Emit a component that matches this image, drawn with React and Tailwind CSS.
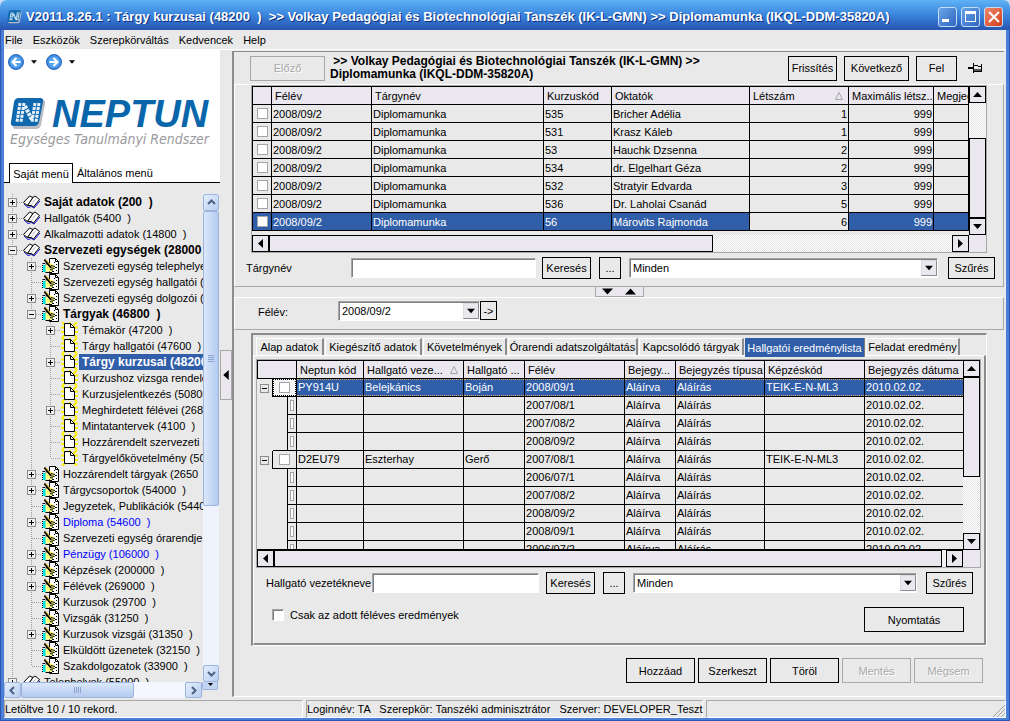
import React, { useState } from 'react'
import clsx from 'clsx'

// ─── Data ───────────────────────────────────────────────────────────────────
// guides: one letter per level (p = plus, m = minus, t = branch, e = last branch, l = line)
const TREE = [
  { guides: 'p', icon: 'book', label: 'Saját adatok (200  )', bold: true },
  { guides: 'p', icon: 'book', label: 'Hallgatók (5400  )' },
  { guides: 'p', icon: 'book', label: 'Alkalmazotti adatok (14800  )' },
  { guides: 'm', icon: 'book', label: 'Szervezeti egységek (28000', bold: true },
  { guides: 'lp', icon: 'hand', label: 'Szervezeti egység telephelyei' },
  { guides: 'lt', icon: 'hand', label: 'Szervezeti egység hallgatói (2' },
  { guides: 'lp', icon: 'hand', label: 'Szervezeti egység dolgozói (2' },
  { guides: 'lm', icon: 'hand', label: 'Tárgyak (46800  )', bold: true },
  { guides: 'llp', icon: 'page', label: 'Témakör (47200  )' },
  { guides: 'llt', icon: 'page', label: 'Tárgy hallgatói (47600  )' },
  { guides: 'llp', icon: 'page', label: 'Tárgy kurzusai (48200', bold: true },
  { guides: 'llt', icon: 'page', label: 'Kurzushoz vizsga rendelé' },
  { guides: 'llt', icon: 'page', label: 'Kurzusjelentkezés (50800' },
  { guides: 'llp', icon: 'page', label: 'Meghirdetett félévei (2684' },
  { guides: 'llt', icon: 'page', label: 'Mintatantervek (4100  )' },
  { guides: 'llt', icon: 'page', label: 'Hozzárendelt szervezeti e' },
  { guides: 'lle', icon: 'page', label: 'Tárgyelőkövetelmény (500' },
  { guides: 'lp', icon: 'hand', label: 'Hozzárendelt tárgyak (2650  )' },
  { guides: 'lp', icon: 'hand', label: 'Tárgycsoportok (54000  )' },
  { guides: 'lt', icon: 'hand', label: 'Jegyzetek, Publikációk (5440' },
  { guides: 'lp', icon: 'hand', label: 'Diploma (54600  )', blue: true },
  { guides: 'lt', icon: 'hand', label: 'Szervezeti egység órarendje (' },
  { guides: 'lp', icon: 'hand', label: 'Pénzügy (106000  )', blue: true },
  { guides: 'lp', icon: 'hand', label: 'Képzések (200000  )' },
  { guides: 'lp', icon: 'hand', label: 'Félévek (269000  )' },
  { guides: 'lt', icon: 'hand', label: 'Kurzusok (29700  )' },
  { guides: 'lt', icon: 'hand', label: 'Vizsgák (31250  )' },
  { guides: 'lp', icon: 'hand', label: 'Kurzusok vizsgái (31350  )' },
  { guides: 'lt', icon: 'hand', label: 'Elküldött üzenetek (32150  )' },
  { guides: 'le', icon: 'hand', label: 'Szakdolgozatok (33900  )' },
  { guides: 'p', icon: 'book', label: 'Telephelyek (55000  )' },
]

const COURSES = [
  ['535', 'Bricher Adélia', 1],
  ['531', 'Krasz Káleb', 1],
  ['53', 'Hauchk Dzsenna', 2],
  ['534', 'dr. Elgelhart Géza', 2],
  ['532', 'Stratyir Edvarda', 3],
  ['536', 'Dr. Laholai Csanád', 5],
  ['56', 'Márovits Rajmonda', 6],
]

const RESULTS = [
  { code: 'PY914U', last: 'Belejkánics', first: 'Boján', term: '2008/09/1' },
  { term: '2007/08/1' },
  { term: '2007/08/2' },
  { term: '2008/09/2', end: true },
  { code: 'D2EU79', last: 'Eszterhay', first: 'Gerő', term: '2007/08/1' },
  { term: '2006/07/1' },
  { term: '2007/08/2' },
  { term: '2008/09/2' },
  { term: '2008/09/1' },
  { term: '2006/07/2' },
]

const TABS = [
  { label: 'Alap adatok', width: 'w-[68px]' },
  { label: 'Kiegészítő adatok', width: 'w-[97px]' },
  { label: 'Követelmények', width: 'w-[84px]' },
  { label: 'Órarendi adatszolgáltatás', width: 'w-[130px]' },
  { label: 'Kapcsolódó tárgyak', width: 'w-[105px]' },
  { label: 'Hallgatói eredménylista', width: 'w-[120px]' },
  { label: 'Feladat eredmény', width: 'w-[94px]' },
]

const DITHER = 'bg-[repeating-conic-gradient(#fff_0_25%,#e4e4e6_0_50%)] bg-[length:2px_2px]'
const SUNKEN = 'border border-t-[#a5a5a8] border-l-[#a5a5a8] border-r-white border-b-white bg-white shadow-[inset_1px_1px_0_#7d7d84]'

// ─── Icons ──────────────────────────────────────────────────────────────────
function BookIcon() {
  return (
    <svg width="18" height="16" viewBox="0 0 18 16" className="shrink-0">
      <path d="M1 10 L5 13.5 L8.5 12.5 L11 14 L17 7" fill="none" stroke="#1010d0" />
      <path d="M0.5 8.5 L6.5 2 L10 3.5 L4.5 11.5 Z" fill="#fff" stroke="#000" strokeLinejoin="round" />
      <path d="M4.5 11.5 L10 3.5 L12 2 L16.5 5.5 L10.5 13 L8 11.5 Z" fill="#fff" stroke="#000" strokeLinejoin="round" />
      <path d="M8 11 L13 4.5" stroke="#c4c4c4" />
    </svg>
  )
}

function HandIcon() {
  return (
    <svg width="18" height="16" viewBox="0 0 18 16" className="shrink-0">
      <path d="M7.5 0.5 H13.5 L16.5 3.5 V15.5 H7.5 Z" fill="#fff" stroke="#000" />
      <path d="M13.5 0.5 V3.5 H16.5" fill="none" stroke="#000" />
      <path d="M12 4.5 H13 M14 6.5 H15 M13 9.5 H15 M14 12.5 H15 M10 13.5 H12" stroke="#000" />
      <path d="M1 7 H4 V14 H1 Z" fill="#00e0e8" />
      <path d="M0.5 5.5 H3" stroke="#000" />
      <path d="M3.5 7.5 L6 5.5 L9 5.5 L13 7.5 L12.5 10 L10 13.5 H3.5 Z" fill="#ffff84" />
      <path d="M3.5 6 L6 5.5 M9 7.5 L13 8.5 M8 9.5 L12.5 10.5 M8 11.5 L11 12 M3.5 14.5 H10" fill="none" stroke="#000" />
      <path d="M2.5 1.5 L9 9.5" stroke="#000" strokeWidth="2" />
      <path d="M3.5 1.5 L9.5 8.5" stroke="#f4c400" />
      <path d="M0.5 7 V15" stroke="#000" strokeDasharray="1 1" />
    </svg>
  )
}

function PageIcon() {
  return (
    <svg width="18" height="16" viewBox="0 0 18 16" className="shrink-0">
      <path
        d="M1 0 L5 4 M9 0 V4 M16 0 L12 4 M17 5.5 H13 M0 5.5 H4 M0 10 H4 M17 10 H13 M1 16 L5 12 M16 16 L12 12"
        stroke="#ffee00"
        strokeWidth="2"
      />
      <path d="M3.5 1.5 H9.5 L13.5 5.5 V13.5 H3.5 Z" fill="#fff" stroke="#000" />
      <path d="M9.5 1.5 V5.5 H13.5" fill="none" stroke="#000" />
    </svg>
  )
}

const ICONS = { book: BookIcon, hand: HandIcon, page: PageIcon }

function Guide({ type }) {
  const boxed = type === 'p' || type === 'm'
  return (
    <svg width="19" height="16" viewBox="0 0 19 16" className="shrink-0" shapeRendering="crispEdges">
      <path d={type === 'e' ? 'M8.5 0 V8' : 'M8.5 0 V16'} stroke="#a0a0a0" strokeDasharray="1 1" />
      {type !== 'l' && <path d="M9 8.5 H19" stroke="#a0a0a0" strokeDasharray="1 1" />}
      {boxed && <rect x="4.5" y="4.5" width="8" height="8" fill="#f0f0f0" stroke="#8c8c90" />}
      {boxed && <path d="M6 8.5 H11" stroke="#000" />}
      {type === 'p' && <path d="M8.5 6 V11" stroke="#000" />}
    </svg>
  )
}

function Triangle({ dir, size = 9 }) {
  const points = { up: '0,7 9,7 4.5,2', down: '0,2 9,2 4.5,7', left: '7,0 7,9 2,4.5', right: '2,0 2,9 7,4.5' }
  return (
    <svg width={size} height={size} viewBox="0 0 9 9">
      <polygon points={points[dir]} fill="#000" />
    </svg>
  )
}

function Chevron({ dir }) {
  const paths = { up: 'M1 6 L4.5 2.5 L8 6', down: 'M1 3 L4.5 6.5 L8 3', left: 'M6 1 L2.5 4.5 L6 8', right: 'M3 1 L6.5 4.5 L3 8' }
  return (
    <svg width="9" height="9" viewBox="0 0 9 9">
      <path d={paths[dir]} fill="none" stroke="#4d6185" strokeWidth="2" />
    </svg>
  )
}

function SortMark() {
  return (
    <svg width="8" height="8" viewBox="0 0 8 8" className="shrink-0">
      <path d="M0.5 7.5 H7.5 L4 0.5 Z" fill="none" stroke="#a8a8a8" />
    </svg>
  )
}

function NavArrow({ flip }) {
  return (
    <svg width="16" height="16" viewBox="0 0 16 16" className={clsx(flip && 'rotate-180')}>
      <circle cx="8" cy="8" r="7.5" fill="#3d8be0" stroke="#2767bd" />
      <ellipse cx="8" cy="8" rx="5.5" ry="5.5" fill="#5aa6ee" />
      <path d="M8.5 4 L4.5 8 L8.5 12 M4.5 8 H12.5" fill="none" stroke="#fff" strokeWidth="2" />
    </svg>
  )
}

function Emblem({ width, height }) {
  return (
    <svg width={width} height={height} viewBox="0 0 36 32" className="shrink-0">
      <path d="M10 2 H32 Q36 2 35 6 L31 27 Q30 31 26 31 H6 Q2 31 3 27 L6 6 Q7 2 10 2 Z" fill="#b9bcc2" />
      <path d="M9 0 H30 Q34 0 33 4 L29 24 Q28 28 24 28 H4 Q0 28 1 24 L4 4 Q5 0 9 0 Z" fill="#0f68ad" />
      <path d="M10 5 L7 24 M14 5 L11 24 M25 5 L22 24 M29 5 L26 24" stroke="#e4f0fa" strokeWidth="3" strokeDasharray="3 1" />
      <path d="M15 8 L22 22" stroke="#e4f0fa" strokeWidth="4" strokeDasharray="3 1" />
    </svg>
  )
}

function PinIcon() {
  return (
    <svg width="15" height="12" viewBox="0 0 15 12" shapeRendering="crispEdges">
      <path d="M0 6 H5" stroke="#000" strokeWidth="2" />
      <path d="M5.5 1 V11 M13.5 2 V10" stroke="#000" />
      <path d="M6 3.5 H9 L11 4.5 H13 M6 9 H13" fill="none" stroke="#000" />
      <path d="M6 7 H13 V9 H6 Z" fill="#555" />
    </svg>
  )
}

// ─── Basic controls ─────────────────────────────────────────────────────────
function Button({ className, disabled, children }) {
  return (
    <button
      disabled={disabled}
      className={clsx(
        'shrink-0 border text-center whitespace-nowrap',
        disabled ? 'border-[#a8a8a8] text-[#a8a8a8] [text-shadow:1px_1px_0_#fff]' : 'border-black',
        className
      )}
    >
      {children}
    </button>
  )
}

function Select({ id, label, value, className }) {
  return (
    <div className={clsx('grid h-5 items-center', SUNKEN, className)}>
      <select id={id} aria-label={label} className="col-start-1 row-start-1 w-full appearance-none bg-transparent pl-[3px] outline-none">
        <option>{value}</option>
      </select>
      <span className="pointer-events-none col-start-1 row-start-1 flex h-4 w-4 items-center justify-center justify-self-end border border-t-[#dcdce0] border-r-[#8c8c90] border-b-[#8c8c90] border-l-[#dcdce0] bg-[#eae8ee]">
        <Triangle dir="down" size={8} />
      </span>
    </div>
  )
}

function Check({ label, small }) {
  return (
    <input
      type="checkbox"
      aria-label={label}
      className={clsx('mx-auto block h-[11px] appearance-none border border-[#a5a5a8] bg-white', small ? 'w-1' : 'w-[11px]')}
    />
  )
}

function ArrowButton({ dir }) {
  return (
    <button aria-label={dir} className="flex h-[17px] w-[17px] shrink-0 items-center justify-center border border-black bg-[#eae8ee]">
      <Triangle dir={dir} />
    </button>
  )
}

function VScroll({ thumb, atEnd }) {
  return (
    <div className="flex w-[17px] shrink-0 flex-col">
      <ArrowButton dir="up" />
      <div className={clsx('flex min-h-0 flex-1 flex-col', DITHER, atEnd && 'justify-end')}>
        <div className={clsx('border border-black bg-[#eae8ee]', thumb)} />
      </div>
      <ArrowButton dir="down" />
    </div>
  )
}

function HScroll({ thumb }) {
  return (
    <div className="flex h-[17px] shrink-0">
      <ArrowButton dir="left" />
      <div className={clsx('flex-1', DITHER)}>
        <div className={clsx('h-full border border-black bg-[#eae8ee]', thumb)} />
      </div>
      <ArrowButton dir="right" />
      <div className="w-[17px] bg-[#eae8ee]" />
    </div>
  )
}

function Th({ children, className, ...rest }) {
  return (
    <th className={clsx('h-[18px] overflow-hidden border-r border-b border-black bg-[#eae8ee] p-0 pl-[3px] text-left font-normal whitespace-nowrap', className)} {...rest}>
      {children}
    </th>
  )
}

// ─── Sidebar ────────────────────────────────────────────────────────────────
const XP_BUTTON = 'flex shrink-0 items-center justify-center rounded-[2px] border border-[#9db5dc] bg-gradient-to-br from-[#e3eefc] to-[#b9cff0]'

function TreeRow({ item, selected, onSelect }) {
  const Icon = ICONS[item.icon]
  return (
    <li className="flex h-4 items-center">
      {[...item.guides].map((g, i) => <Guide key={i} type={g} />)}
      <Icon />
      <button
        onClick={onSelect}
        className={clsx(
          'h-4 shrink-0 pl-[3px] leading-4 whitespace-pre',
          item.bold && 'text-[12px] font-bold',
          item.blue && 'text-[#0000ff]',
          selected && 'bg-[#315ea8] text-white'
        )}
      >
        {item.label}
      </button>
    </li>
  )
}

function Sidebar() {
  const [selected, setSelected] = useState(10)
  return (
    <aside className="flex w-[216px] shrink-0 flex-col">
      <div className="shrink-0 bg-white">
        <div className="flex items-center gap-[7px] pt-1 pl-1">
          <button aria-label="Vissza"><NavArrow /></button>
          <Triangle dir="down" size={6} />
          <button aria-label="Előre" className="ml-[2px]"><NavArrow flip /></button>
          <Triangle dir="down" size={6} />
        </div>
        <div className="mt-5 flex h-10 items-end gap-[6px] pl-[6px]">
          <Emblem width={36} height={32} />
          <span className="font-['Liberation_Sans',sans-serif] text-[38px] leading-8 font-bold text-[#0a66ab] italic">NEPTUN</span>
        </div>
        <p className="mt-px pl-[6px] font-['DejaVu_Sans_Condensed','DejaVu_Sans',sans-serif] text-[14px] leading-4 whitespace-nowrap text-[#9a9a9e] italic">
          Egységes Tanulmányi Rendszer
        </p>
        <div className="mt-4 flex">
          <span className="w-[5px] border-b border-black" />
          <button className="h-5 w-16 border border-b-0 border-black whitespace-nowrap">Saját menü</button>
          <button className="flex-1 border-b border-black pl-1 text-left">Általános menü</button>
        </div>
      </div>

      <div className="mt-[11px] flex min-h-0 flex-1">
        <ul className="min-w-0 flex-1 overflow-hidden">
          {TREE.map((item, i) => (
            <TreeRow key={item.label} item={item} selected={selected === i} onSelect={() => setSelected(i)} />
          ))}
        </ul>
        <div className="mr-px flex w-4 flex-col bg-[#eef3fe]">
          <button aria-label="Fel" className={clsx(XP_BUTTON, 'h-[17px]')}><Chevron dir="up" /></button>
          <div className="min-h-0 flex-1">
            <div className="flex h-[65%] flex-col items-center justify-center gap-px rounded-[2px] border border-[#9db5dc] bg-gradient-to-r from-[#dbe8fc] to-[#b4caee]">
              {[0, 1, 2, 3].map(i => <span key={i} className="h-px w-[6px] bg-[#8ba5d0]" />)}
            </div>
          </div>
          <button aria-label="Le" className={clsx(XP_BUTTON, 'h-[17px]')}><Chevron dir="down" /></button>
        </div>
      </div>

      <div className="mb-[2px] flex h-4 shrink-0">
        <button aria-label="Balra" className={clsx(XP_BUTTON, 'w-[17px]')}><Chevron dir="left" /></button>
        <div className="flex-1 bg-[#f4f7ff]">
          <div className="flex h-full w-[69%] items-center justify-center gap-px rounded-[2px] border border-[#9db5dc] bg-gradient-to-b from-[#dbe8fc] to-[#b4caee]">
            {[0, 1, 2, 3].map(i => <span key={i} className="h-[6px] w-px bg-[#8ba5d0]" />)}
          </div>
        </div>
        <button aria-label="Jobbra" className={clsx(XP_BUTTON, 'w-[17px]')}><Chevron dir="right" /></button>
        <span className="mr-[2px] flex h-2 w-4 items-start justify-center overflow-hidden rounded-b-[2px] border border-t-0 border-[#9db5dc] bg-[#c3d5f2]">
          <Triangle dir="down" size={5} />
        </span>
      </div>
    </aside>
  )
}

// ─── Upper list ─────────────────────────────────────────────────────────────
function CourseTable() {
  return (
    <table className="w-full table-fixed border-separate border-spacing-0 border-t border-l border-black">
      <colgroup>
        <col className="w-[19px]" /><col className="w-[100px]" /><col className="w-[172px]" /><col className="w-[68px]" />
        <col className="w-[138px]" /><col className="w-[99px]" /><col className="w-[85px]" /><col />
      </colgroup>
      <thead>
        <tr>
          <Th />
          <Th>Félév</Th>
          <Th>Tárgynév</Th>
          <Th>Kurzuskód</Th>
          <Th>Oktatók</Th>
          <Th><span className="flex items-center justify-between pr-[5px]">Létszám<SortMark /></span></Th>
          <Th>Maximális létsz...</Th>
          <Th>Megjeg</Th>
        </tr>
      </thead>
      <tbody>
        {COURSES.map(([code, teacher, count], i) => {
          const sel = i === COURSES.length - 1
          const td = clsx('h-[18px] overflow-hidden border-r border-b border-black px-[1px] py-0 leading-4 whitespace-nowrap', sel && 'bg-[#315ea8] text-white')
          return (
            <tr key={code}>
              <td className={td}><Check label={teacher} /></td>
              <td className={td}>2008/09/2</td>
              <td className={td}>Diplomamunka</td>
              <td className={td}>{code}</td>
              <td className={td}>{teacher}</td>
              <td className="h-[18px] border-r border-b border-black px-[1px] py-0 text-right leading-4">{count}</td>
              <td className={clsx(td, 'text-right')}>999</td>
              <td className={td} />
            </tr>
          )
        })}
      </tbody>
    </table>
  )
}

// ─── Results list ───────────────────────────────────────────────────────────
function Cell({ sel, last, children }) {
  return (
    <td className={clsx('h-[18px] overflow-hidden border-b border-black p-0', !last && 'border-r', sel && 'bg-[#315ea8] text-white')}>
      <div className={clsx('h-[17px] pl-px whitespace-nowrap', sel ? 'border-y border-dotted border-[#e0b060] leading-[14px]' : 'leading-4')}>
        {children}
      </div>
    </td>
  )
}

function ResultTable() {
  return (
    <table className="w-full table-fixed border-separate border-spacing-0">
      <colgroup>
        <col className="w-[16px]" /><col className="w-[15px]" /><col className="w-[9px]" /><col className="w-[67px]" /><col className="w-[100px]" />
        <col className="w-[61px]" /><col className="w-[100px]" /><col className="w-[51px]" /><col className="w-[89px]" /><col className="w-[100px]" /><col />
      </colgroup>
      <thead>
        <tr>
          <Th colSpan={3} className="h-[19px] border-t border-l" />
          <Th className="border-t">Neptun kód</Th>
          <Th className="border-t"><span className="flex items-center justify-between pr-[5px]">Hallgató veze...<SortMark /></span></Th>
          <Th className="border-t">Hallgató ...</Th>
          <Th className="border-t">Félév</Th>
          <Th className="border-t">Bejegy...</Th>
          <Th className="border-t">Bejegyzés típusa</Th>
          <Th className="border-t">Képzéskód</Th>
          <Th className="border-t border-r-0">Bejegyzés dátuma</Th>
        </tr>
      </thead>
      <tbody>
        {RESULTS.map((r, i) => {
          const sel = i === 0
          return (
            <tr key={i}>
              {r.code ? (
                <>
                  <td className="border-r border-black p-0">
                    <svg width="9" height="9" viewBox="0 0 9 9" className="mx-auto" shapeRendering="crispEdges">
                      <rect x="0.5" y="0.5" width="8" height="8" fill="none" stroke="#8c8c90" />
                      <path d="M2 4.5 H7" stroke="#000" />
                    </svg>
                  </td>
                  <td colSpan={2} className="border-r border-b border-black p-0">
                    <div className={clsx('flex h-[17px] items-center', sel && 'border border-dotted border-black bg-[#f4f4f4]')}>
                      <Check label={r.code} />
                    </div>
                  </td>
                </>
              ) : (
                <>
                  <td className="p-0" />
                  <td className={clsx('border-r border-black p-0', r.end && 'border-b')} />
                  <td className="border-r border-b border-black p-0"><Check small label={r.term} /></td>
                </>
              )}
              <Cell sel={sel}>{r.code}</Cell>
              <Cell sel={sel}>{r.last}</Cell>
              <Cell sel={sel}>{r.first}</Cell>
              <Cell sel={sel}>{r.term}</Cell>
              <Cell sel={sel}>Aláírva</Cell>
              <Cell sel={sel}>Aláírás</Cell>
              <Cell sel={sel}>{r.code && 'TEIK-E-N-ML3'}</Cell>
              <Cell sel={sel} last>2010.02.02.</Cell>
            </tr>
          )
        })}
      </tbody>
    </table>
  )
}

function Tabs() {
  const [active, setActive] = useState(5)
  return (
    <div className="flex h-5 shrink-0 items-end pl-[3px]">
      {TABS.map((tab, i) => (
        <button
          key={tab.label}
          onClick={() => setActive(i)}
          className={clsx(
            'mr-px shrink-0 text-center whitespace-nowrap',
            tab.width,
            i === active
              ? 'relative -mb-[2px] h-[19px] border-r border-[#7d7d84] bg-[#315ea8] text-white'
              : 'h-[17px] border-t border-r-2 border-l border-t-white border-r-[#8c8c90] border-l-white'
          )}
        >
          {tab.label}
        </button>
      ))}
    </div>
  )
}

// ─── Main area ──────────────────────────────────────────────────────────────
function Main() {
  return (
    <main className="mt-px mr-[2px] mb-[3px] flex min-w-0 flex-1 flex-col border-t border-b border-l-2 border-t-[#8c8c90] border-b-white border-l-[#8c8c90]">
      <div className="flex h-8 shrink-0 items-center pr-[21px] pl-4">
        <Button disabled className="h-[25px] w-[75px]">Előző</Button>
        <h1 className="ml-[5px] min-w-0 flex-1 text-[12px] leading-[13px] font-bold whitespace-pre">
          {' >> Volkay Pedagógiai és Biotechnológiai Tanszék (IK-L-GMN) >>\nDiplomamunka (IKQL-DDM-35820A)'}
        </h1>
        <div className="flex items-center gap-[7px]">
          <Button className="h-[25px] w-[49px]">Frissítés</Button>
          <Button className="h-[25px] w-[65px]">Következő</Button>
          <Button className="h-[25px] w-[41px]">Fel</Button>
        </div>
        <span className="ml-[11px]"><PinIcon /></span>
      </div>

      <section className="shrink-0 border border-t-white border-r-[#a8a8a8] border-b-[#a8a8a8] border-l-white">
        <div className="mx-4 border border-[#a8a8a8]">
          <div className="flex">
            <div className="min-w-0 flex-1 pb-1"><CourseTable /></div>
            <VScroll thumb="h-20" atEnd />
          </div>
          <HScroll thumb="w-[65%]" />
        </div>
        <div className="flex items-center pt-1 pr-2 pb-[7px] pl-[11px]">
          <label htmlFor="course-search" className="w-[105px] shrink-0">Tárgynév</label>
          <input id="course-search" className={clsx('h-5 w-[185px] px-1 outline-none', SUNKEN)} />
          <Button className="ml-[6px] h-[22px] w-[49px]">Keresés</Button>
          <Button className="mx-2 h-[22px] w-[22px]">...</Button>
          <Select label="Szűrő" value="Minden" className="flex-1" />
          <Button className="ml-[10px] h-[22px] w-[47px]">Szűrés</Button>
        </div>
      </section>

      <div className="flex h-[10px] shrink-0 justify-center">
        <div className="flex w-[49px] items-center justify-around border border-t-0 border-[#a8a8a8] bg-[#eae8ee]">
          <Triangle dir="down" size={11} />
          <Triangle dir="up" size={11} />
        </div>
      </div>

      <section className="flex h-[33px] shrink-0 items-start border border-t-white border-r-[#a8a8a8] border-b-[#a8a8a8] border-l-white pt-[3px] pl-[23px]">
        <label htmlFor="term" className="w-20 pt-1">Félév:</label>
        <Select id="term" value="2008/09/2" className="w-[142px]" />
        <Button className="h-[19px] w-[17px]">-&gt;</Button>
      </section>

      <section className="mx-[17px] mt-[3px] flex min-h-0 flex-1 flex-col border-t-2 border-r border-b border-l-2 border-t-[#8c8c90] border-r-white border-b-white border-l-[#8c8c90]">
        <Tabs />
        <div className="flex min-h-0 flex-1 flex-col border-t border-r-2 border-b-2 border-l border-t-white border-r-[#8c8c90] border-b-[#8c8c90] border-l-white">
          <div className="mt-[3px] mr-[3px] ml-[2px] flex min-h-0 flex-1 flex-col border border-[#a8a8a8]">
            <div className="flex min-h-0 flex-1">
              <div className="min-w-0 flex-1 overflow-hidden border-b border-black"><ResultTable /></div>
              <VScroll thumb="h-[100px]" />
            </div>
            <HScroll thumb="w-[calc(100%-4px)]" />
          </div>
          <div className="flex shrink-0 items-center pt-1 pr-[11px] pl-3">
            <label htmlFor="student-search" className="w-[106px] shrink-0 whitespace-nowrap">Hallgató vezetékneve</label>
            <input id="student-search" className={clsx('h-5 w-[167px] px-1 outline-none', SUNKEN)} />
            <Button className="ml-[7px] h-[22px] w-[49px]">Keresés</Button>
            <Button className="mx-2 h-[22px] w-[22px]">...</Button>
            <Select label="Szűrő" value="Minden" className="flex-1" />
            <Button className="ml-[9px] h-[22px] w-[47px]">Szűrés</Button>
          </div>
          <div className="flex shrink-0 items-start justify-between pt-[13px] pr-5 pb-[11px] pl-[18px]">
            <label className="flex items-center gap-[6px] pt-px">
              <input type="checkbox" className={clsx('h-3 w-3 appearance-none', SUNKEN)} />
              Csak az adott féléves eredmények
            </label>
            <Button className="h-[25px] w-[100px]">Nyomtatás</Button>
          </div>
        </div>
      </section>

      <div className="flex shrink-0 justify-end gap-[3px] pt-3 pr-[21px] pb-[13px]">
        <Button className="h-[25px] w-[69px]">Hozzáad</Button>
        <Button className="h-[25px] w-[69px]">Szerkeszt</Button>
        <Button className="h-[25px] w-[69px]">Töröl</Button>
        <Button disabled className="h-[25px] w-[69px]">Mentés</Button>
        <Button disabled className="h-[25px] w-[69px]">Mégsem</Button>
      </div>
    </main>
  )
}

// ─── Window chrome ──────────────────────────────────────────────────────────
const CAPTION = 'flex h-5 w-[19px] items-center justify-center rounded-[3px] border border-[#c5dcf7]'

function TitleBar() {
  return (
    <header className="flex h-[30px] shrink-0 items-center rounded-t-[7px] bg-linear-to-b from-[#5fb2f4] via-[#3a84dd] to-[#2855b0] pt-[3px] pr-[7px] pl-[7px]">
      <Emblem width={15} height={14} />
      <span className="ml-1 min-w-0 flex-1 overflow-hidden text-[13px] font-bold whitespace-pre text-white [text-shadow:1px_1px_0_#0c2f80]">
        {'V2011.8.26.1 : Tárgy kurzusai (48200  )  >> Volkay Pedagógiai és Biotechnológiai Tanszék (IK-L-GMN) >> Diplomamunka (IKQL-DDM-35820A)'}
      </span>
      <div className="flex gap-1">
        <button aria-label="Kis méret" className={clsx(CAPTION, 'bg-linear-to-br from-[#6aa4e8] to-[#2f66c0]')}>
          <span className="mt-2 mr-1 h-[3px] w-[7px] bg-white" />
        </button>
        <button aria-label="Teljes méret" className={clsx(CAPTION, 'bg-linear-to-br from-[#6aa4e8] to-[#2f66c0]')}>
          <span className="h-[11px] w-[11px] border border-t-[3px] border-white" />
        </button>
        <button aria-label="Bezárás" className={clsx(CAPTION, 'bg-linear-to-br from-[#f0876a] to-[#d03c14]')}>
          <svg width="12" height="12" viewBox="0 0 12 12">
            <path d="M1 1 L11 11 M11 1 L1 11" stroke="#fff" strokeWidth="2" />
          </svg>
        </button>
      </div>
    </header>
  )
}

function StatusBar() {
  const panel = 'border border-t-[#a8a8a8] border-l-[#a8a8a8] border-r-white border-b-white whitespace-pre leading-4'
  return (
    <footer className="flex h-[18px] shrink-0 gap-[3px]">
      <div className={clsx(panel, 'w-[299px]')}>Letöltve 10 / 10 rekord.</div>
      <div className={clsx(panel, 'w-[397px]')}>{'Loginnév: TA   Szerepkör: Tanszéki adminisztrátor   Szerver: DEVELOPER_Teszt'}</div>
      <div className={clsx(panel, 'flex flex-1 items-end justify-end')}>
        <svg width="12" height="12" viewBox="0 0 12 12">
          <path d="M0 12 L12 0 M4 12 L12 4 M8 12 L12 8" stroke="#a0a0a4" strokeWidth="1" />
        </svg>
      </div>
    </footer>
  )
}

export default function App() {
  return (
    <div className="flex h-screen flex-col bg-[#c9d8f5] font-['Liberation_Sans',Arial,sans-serif] text-[11px] leading-[14px] text-black">
      <TitleBar />
      <div className="flex min-h-0 flex-1 flex-col bg-[#4a7fd8] px-1 pb-[3px] shadow-[inset_1px_0_0_#2c55b4,inset_-1px_-1px_0_#2c55b4]">
        <div className="flex min-h-0 flex-1 flex-col bg-[#e9e9e9]">
          <nav className="flex h-5 shrink-0 items-center gap-[10px] border-b border-white pl-px">
            {['File', 'Eszközök', 'Szerepkörváltás', 'Kedvencek', 'Help'].map(m => <button key={m}>{m}</button>)}
          </nav>
          <div className="flex min-h-0 flex-1">
            <Sidebar />
            <div className="flex w-3 shrink-0 items-center">
              <button aria-label="Panel elrejtése" className="flex h-[50px] w-3 items-center justify-center border border-[#a8a8a8] bg-[#eae8ee]">
                <Triangle dir="left" size={12} />
              </button>
            </div>
            <Main />
          </div>
          <StatusBar />
        </div>
      </div>
    </div>
  )
}
